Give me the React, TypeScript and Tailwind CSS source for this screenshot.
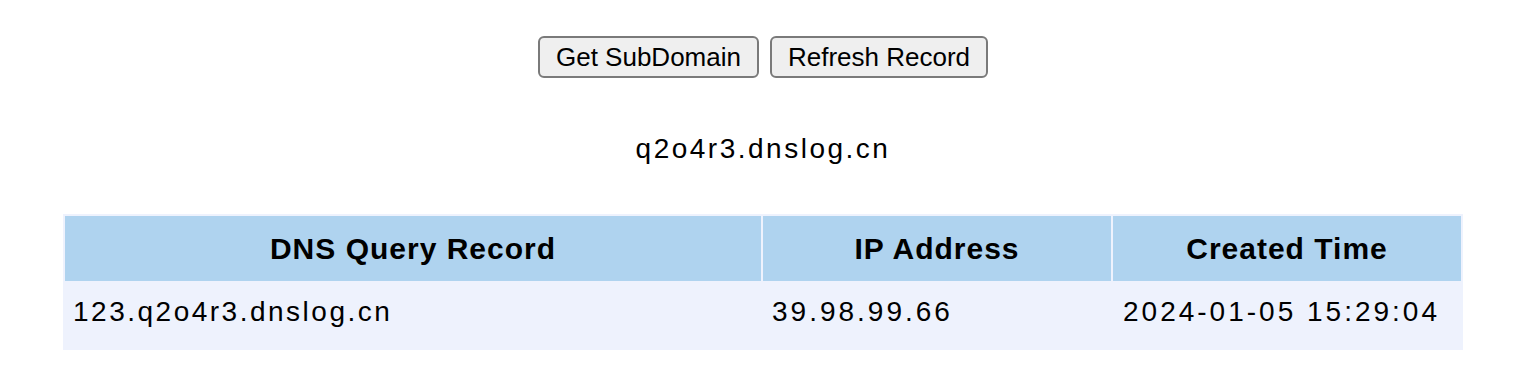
const records = [
  { name: "123.q2o4r3.dnslog.cn", ip: "39.98.99.66", time: "2024-01-05 15:29:04" },
];

export default function App() {
  return (
    <div className="min-h-[384px] w-full bg-white font-['Liberation_Sans',Arial,sans-serif] text-black">
      <div className="ml-[63px] w-[1400px] pt-[36px]">
        {/* Actions */}
        <div className="flex justify-center gap-[11px]">
          <button className="h-[42px] rounded-[6px] border-2 border-[#7a7a7a] bg-[#efefef] px-[16px] text-[26px] leading-none text-black">
            Get SubDomain
          </button>
          <button className="h-[42px] rounded-[6px] border-2 border-[#7a7a7a] bg-[#efefef] px-[16px] text-[26px] leading-none text-black">
            Refresh Record
          </button>
        </div>

        {/* Current subdomain */}
        <div className="mt-[51px] text-center text-[28px] leading-[40px] tracking-[2.5px]">
          q2o4r3.dnslog.cn
        </div>

        {/* Records */}
        <table className="mt-[45px] w-[1400px] table-fixed border-separate border-spacing-[2px] bg-[#eef2fd]">
          <thead>
            <tr>
              <th className="h-[65px] w-[696px] bg-[#afd3ef] p-0 text-center text-[30px] font-bold tracking-[1px]">
                DNS Query Record
              </th>
              <th className="h-[65px] w-[348px] bg-[#afd3ef] p-0 text-center text-[30px] font-bold tracking-[1px]">
                IP Address
              </th>
              <th className="h-[65px] w-[348px] bg-[#afd3ef] p-0 text-center text-[30px] font-bold tracking-[1px]">
                Created Time
              </th>
            </tr>
          </thead>
          <tbody>
            {records.map((r) => (
              <tr key={r.name}>
                <td className="h-[65px] pb-[7px] pl-[8px] text-left text-[28px] tracking-[2.5px]">{r.name}</td>
                <td className="h-[65px] pb-[7px] pl-[9px] text-left text-[28px] tracking-[3px]">{r.ip}</td>
                <td className="h-[65px] pb-[7px] pl-[10px] text-left text-[28px] tracking-[3px]">{r.time}</td>
              </tr>
            ))}
          </tbody>
        </table>
      </div>
    </div>
  );
}
